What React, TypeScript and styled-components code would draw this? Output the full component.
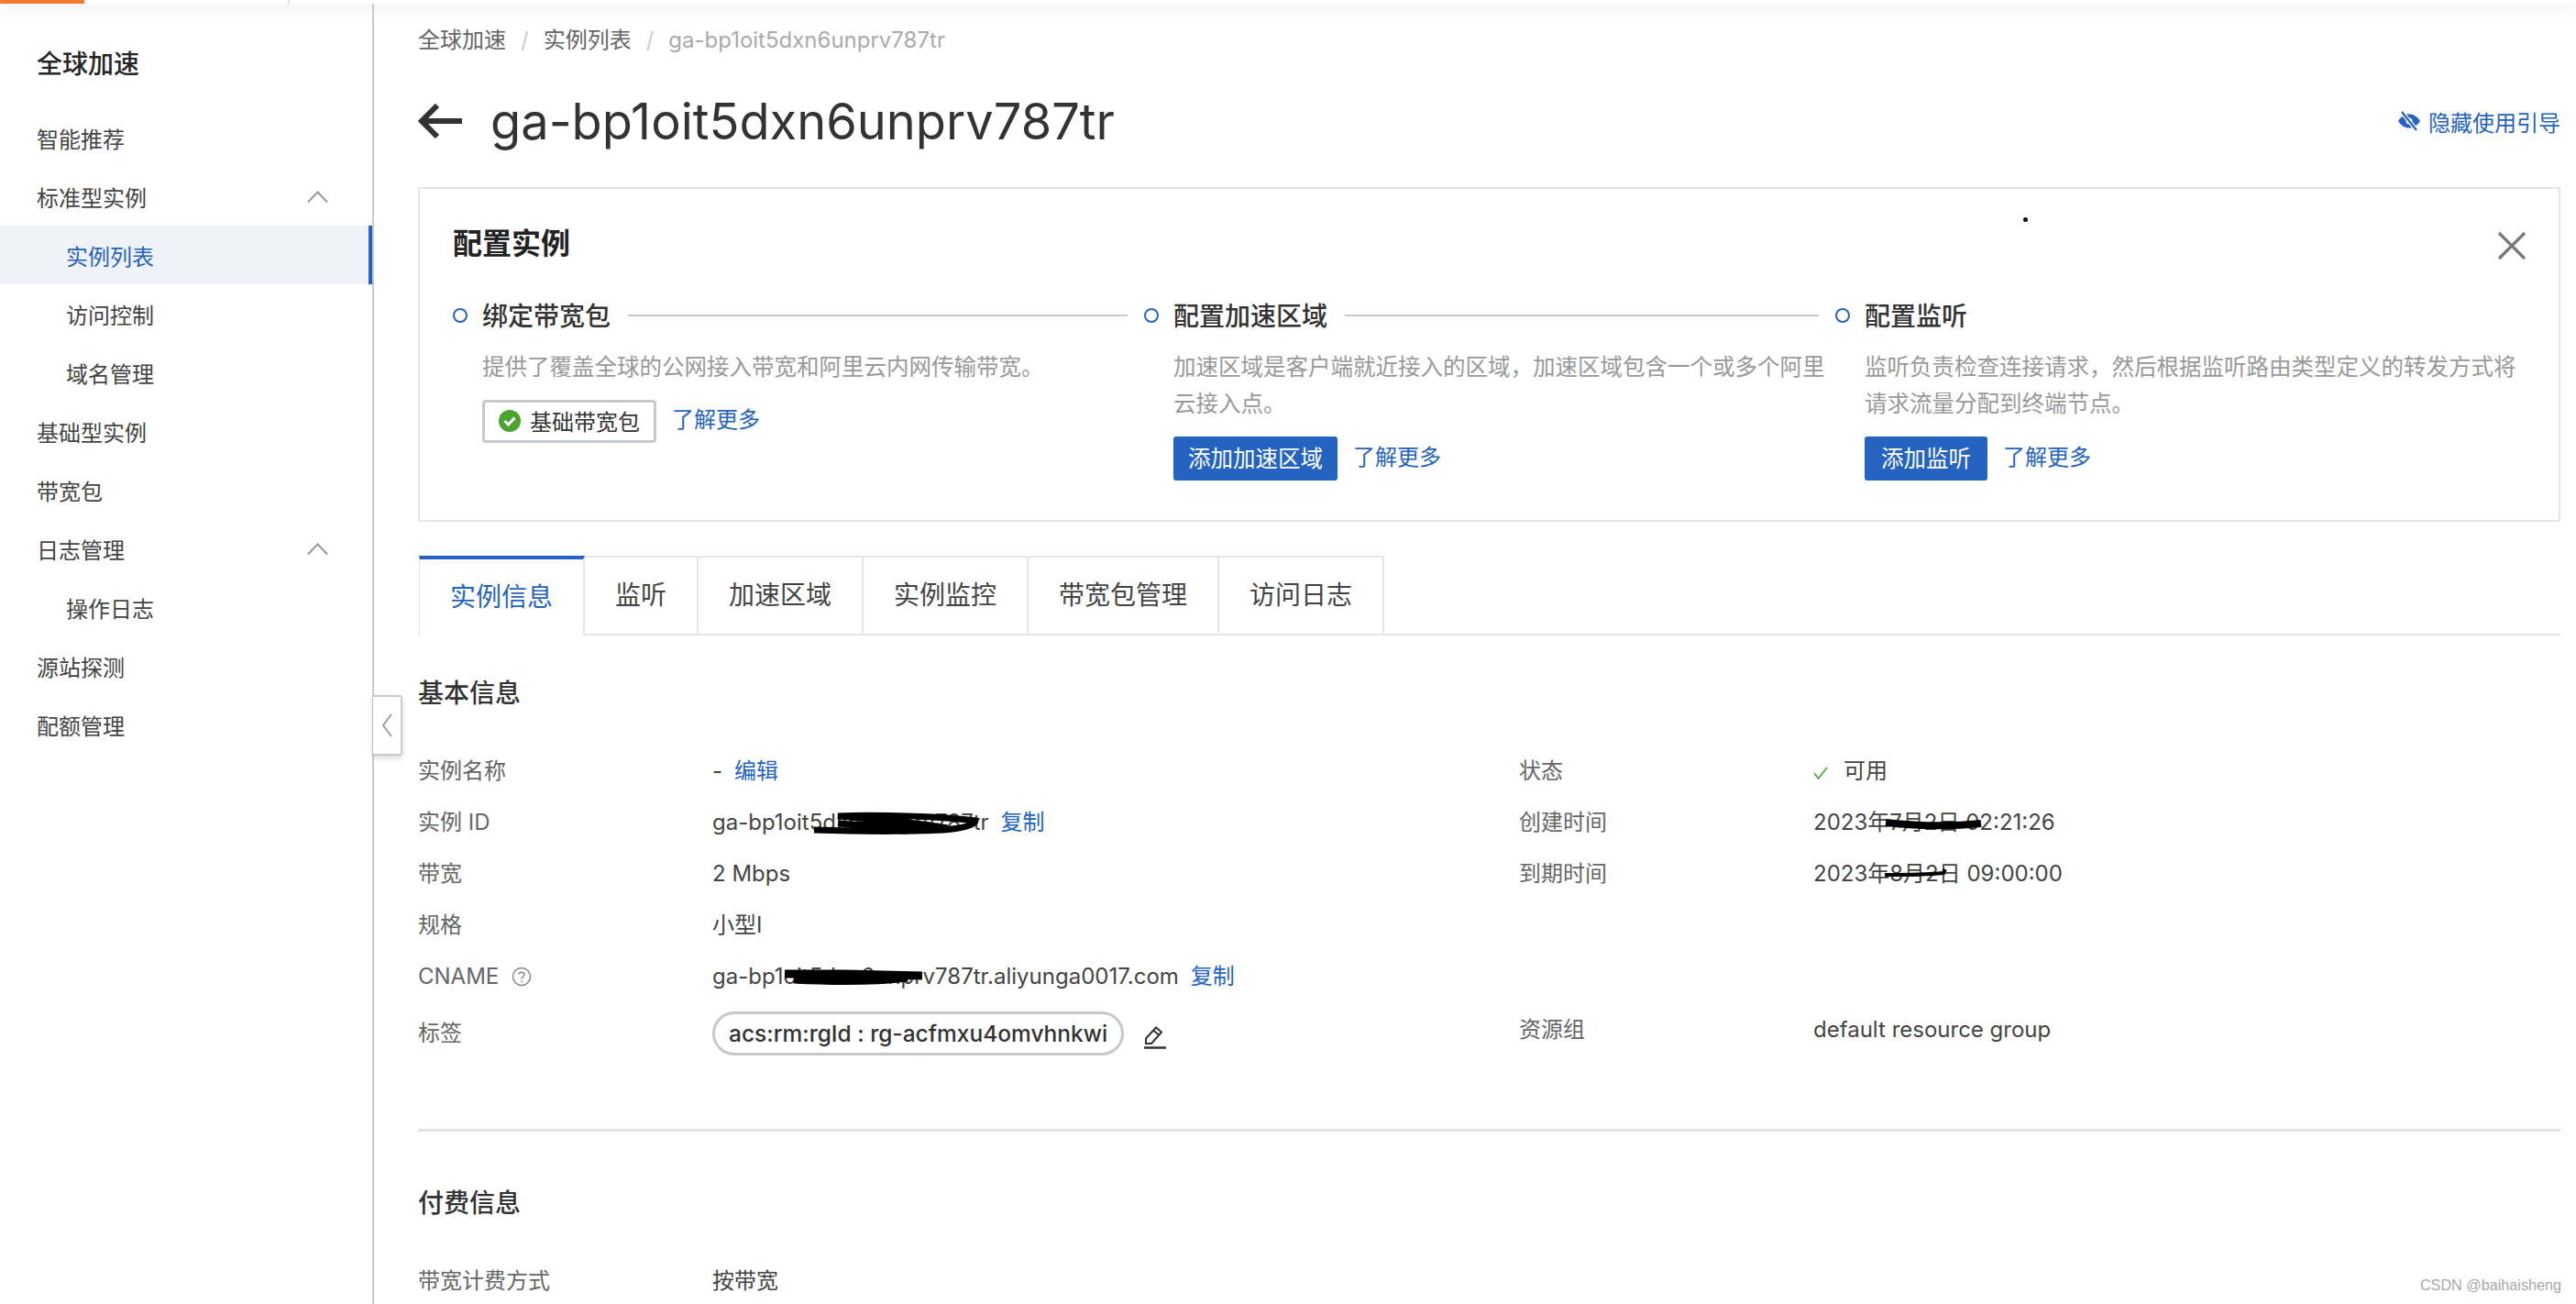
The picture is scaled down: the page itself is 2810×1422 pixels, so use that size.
import React from 'react';
import styled, { createGlobalStyle } from 'styled-components';

const FONT = '"Inter", "Noto Sans CJK SC", sans-serif';

const Global = createGlobalStyle`
  html, body {
    margin: 0;
    padding: 0;
    background: #fff;
  }
  * {
    box-sizing: border-box;
  }
`;

const Page = styled.div`
  position: relative;
  width: 2810px;
  height: 1422px;
  overflow: hidden;
  font-family: ${FONT};
  font-size: 24px;
  color: #333;
`;

const TopBar = styled.div`
  height: 4px;
  display: flex;
  background: #fff;
  box-shadow: 0 4px 16px rgba(0, 0, 0, 0.14);
`;

const TopAccent = styled.div`
  width: 92px;
  background: #f47a30;
`;

const TopTick = styled.div`
  width: 2px;
  margin-left: 222px;
  background: #e0e0e0;
`;

const Body = styled.div`
  position: relative;
  display: flex;
  height: 1418px;
`;

const Sidebar = styled.aside`
  width: 408px;
  flex: none;
  border-right: 2px solid #c8cacc;
  padding-top: 36px;
`;

const SideTitle = styled.div`
  font-size: 28px;
  font-weight: 500;
  color: #262626;
  padding-left: 40px;
  height: 60px;
  line-height: 60px;
  margin-bottom: 18px;
`;

const SideItem = styled.div<{ $sub?: boolean; $active?: boolean }>`
  height: 64px;
  display: flex;
  align-items: center;
  justify-content: space-between;
  padding-left: ${(p) => (p.$sub ? '72px' : '40px')};
  padding-right: 48px;
  color: ${(p) => (p.$active ? '#2563c0' : '#444')};
  background: ${(p) => (p.$active ? '#eff3f8' : 'transparent')};
  border-right: ${(p) => (p.$active ? '4px solid #2563c0' : 'none')};
`;

const Main = styled.main`
  flex: 1;
  padding: 22px 17px 0 48px;
  min-width: 0;
`;

const Crumbs = styled.div`
  display: flex;
  gap: 16px;
  height: 36px;
  line-height: 36px;
  color: #666;
`;

const CrumbSep = styled.span`
  color: #ccc;
`;

const CrumbLast = styled.span`
  color: #aaa;
`;

const TitleRow = styled.div`
  display: flex;
  align-items: center;
  height: 70px;
  margin-top: 35px;
`;

const BackIcon = styled.svg`
  width: 48px;
  height: 38px;
  margin-right: 31px;
  flex: none;
`;

const PageTitle = styled.h1`
  margin: 0;
  flex: 1;
  font-size: 54.2px;
  font-weight: 400;
  color: #333;
`;

const GuideLink = styled.a`
  display: flex;
  align-items: center;
  gap: 8px;
  color: #2563c0;
`;

const Panel = styled.section`
  position: relative;
  height: 365px;
  margin-top: 37px;
  border: 2px solid #e6e6e6;
  padding: 0 36px;
`;

const PanelTitle = styled.h2`
  margin: 0;
  padding-top: 40px;
  height: 110px;
  font-size: 32px;
  line-height: 40px;
  font-weight: 600;
  color: #222;
`;

const CloseIcon = styled.svg`
  position: absolute;
  top: 46px;
  right: 35px;
  width: 32px;
  height: 32px;
`;

const Speck = styled.i`
  position: absolute;
  left: 1749px;
  top: 31px;
  width: 5px;
  height: 5px;
  border-radius: 50%;
  background: #111;
`;

const Steps = styled.div`
  display: grid;
  grid-template-columns: 754px 754px 1fr;
  margin-top: 8px;
`;

const StepHead = styled.div`
  display: flex;
  align-items: center;
  height: 40px;
  padding-right: 18px;
`;

const StepDot = styled.span`
  width: 16px;
  height: 16px;
  flex: none;
  border: 2.5px solid #2563c0;
  border-radius: 50%;
  margin-right: 16px;
`;

const StepTitle = styled.span`
  font-size: 28px;
  font-weight: 500;
  color: #333;
  flex: none;
  margin-bottom: 3px;
`;

const StepLine = styled.span`
  flex: 1;
  height: 2px;
  background: #c8c8c8;
  margin-left: 19px;
`;

const StepBody = styled.div`
  padding: 16px 20px 0 32px;
`;

const StepDesc = styled.p`
  margin: 0;
  color: #999;
  font-size: 24.5px;
  line-height: 40px;
  width: 725px;
`;

const StepActions = styled.div`
  display: flex;
  align-items: center;
  gap: 17px;
  margin-top: 16px;
`;

const Tag = styled.div`
  display: flex;
  align-items: center;
  gap: 10px;
  height: 47px;
  width: 190px;
  padding: 0 0 2px 15px;
  border: 3px solid #c5c9cd;
  border-radius: 4px;
`;

const PrimaryButton = styled.button<{ $pad: number }>`
  height: 48px;
  padding: 0 ${(p) => p.$pad}px 4px;
  border: none;
  border-radius: 3px;
  background: #2563c0;
  color: #fff;
  font: inherit;
  font-size: 24.5px;
`;

const TextLink = styled.a`
  color: #2563c0;
`;

const LearnMore = styled(TextLink)`
  margin-bottom: 8px;
`;

const Tabs = styled.div`
  display: flex;
  height: 87px;
  margin-top: 37px;
  border-bottom: 2px solid #e6e6e6;
`;

const TabItem = styled.div<{ $active?: boolean }>`
  display: flex;
  align-items: center;
  height: ${(p) => (p.$active ? '87px' : '85px')};
  padding: 0 33px 5px;
  font-size: 28px;
  color: ${(p) => (p.$active ? '#2563c0' : '#444')};
  border-top: ${(p) => (p.$active ? '4px solid #2563c0' : '2px solid #e6e6e6')};
  border-right: 2px solid #e6e6e6;
  background: #fff;
  margin-left: ${(p) => (p.$active ? '1px' : '0')};
  border-left: ${(p) => (p.$active ? '1px solid #e6e6e6' : 'none')};
`;

const SectionTitle = styled.h3<{ $top: number }>`
  margin: ${(p) => p.$top}px 0 0;
  font-size: 28px;
  line-height: 40px;
  font-weight: 500;
  color: #333;
`;

const InfoGrid = styled.div`
  display: grid;
  grid-template-columns: 1201px 1fr;
  margin-top: 37px;
`;

const InfoCol = styled.div`
  display: flex;
  flex-direction: column;
`;

const InfoRow = styled.div<{ $h?: number; $top?: number }>`
  display: flex;
  align-items: center;
  height: ${(p) => p.$h ?? 56}px;
  margin-top: ${(p) => p.$top ?? 0}px;
`;

const Label = styled.span`
  width: 321px;
  flex: none;
  color: #666;
  line-height: 32px;
  display: flex;
  align-items: center;
  gap: 14px;
`;

const Value = styled.span`
  position: relative;
  display: inline-flex;
  align-items: center;
  gap: 13px;
  color: #444;
  line-height: 32px;
  white-space: nowrap;
`;

// the black marker strokes someone drew over the screenshot
const Scribble = styled.svg<{ $x: number; $y: number }>`
  position: absolute;
  left: ${(p) => p.$x}px;
  top: ${(p) => p.$y}px;
  overflow: visible;
`;

const StatusCheck = styled.svg`
  width: 16px;
  height: 14px;
  margin: 3px 4px 0 0;
`;

const Pill = styled.div`
  height: 48px;
  display: flex;
  align-items: center;
  padding: 0 15px;
  border: 3px solid #c5c9cd;
  border-radius: 24px;
  color: #333;
  font-size: 24.5px;
  font-weight: 500;
`;

const EditIcon = styled.svg`
  width: 26px;
  height: 26px;
  margin: 8px 0 0 8px;
`;

const Divider = styled.div`
  height: 3px;
  background: #e3e3e3;
  margin-top: 70px;
`;

const Watermark = styled.div`
  position: absolute;
  right: 16px;
  bottom: 11px;
  font-family: "Liberation Sans", sans-serif;
  font-size: 16.2px;
  color: #a8a8a8;
`;

const Handle = styled.div`
  position: absolute;
  left: 407px;
  top: 754px;
  width: 32px;
  height: 66px;
  display: flex;
  align-items: center;
  justify-content: center;
  background: #fff;
  border: 2px solid #c8cacc;
  border-left: none;
  border-radius: 0 3px 3px 0;
  box-shadow: 0 3px 6px rgba(0, 0, 0, 0.15);
`;

const sideItems = [
  { text: '智能推荐' },
  { text: '标准型实例', open: true },
  { text: '实例列表', sub: true, active: true },
  { text: '访问控制', sub: true },
  { text: '域名管理', sub: true },
  { text: '基础型实例' },
  { text: '带宽包' },
  { text: '日志管理', open: true },
  { text: '操作日志', sub: true },
  { text: '源站探测' },
  { text: '配额管理' },
];

const tabs = ['实例信息', '监听', '加速区域', '实例监控', '带宽包管理', '访问日志'];

function ChevronUp() {
  return (
    <svg width="23" height="13" viewBox="0 0 23 13" fill="none" stroke="#999" strokeWidth="2">
      <path d="M1 12.500 11.500 1.500 22 12.500" />
    </svg>
  );
}

function EyeOff() {
  return (
    <svg width="26" height="24" viewBox="0 0 26 24">
      <path d="M1 12c3-5 7.500-7.500 12-7.500S22 7 25 12c-3 5-7.500 7.500-12 7.500S4 17 1 12Z" fill="#2563c0" />
      <circle cx="13" cy="12" r="3.500" fill="#fff" />
      <path d="M5 2 21 22" stroke="#fff" strokeWidth="4.500" />
      <path d="M5 2 21 22" stroke="#2563c0" strokeWidth="2.200" />
    </svg>
  );
}

function CheckBadge() {
  return (
    <svg width="24" height="24" viewBox="0 0 24 24">
      <circle cx="12" cy="12" r="12" fill="#4ba32f" />
      <path d="M6.500 12 10.500 16 17.500 8.500" fill="none" stroke="#fff" strokeWidth="3" />
    </svg>
  );
}

function StepBlock(props: {
  title: string;
  desc: string;
  line?: boolean;
  action: React.ReactNode;
}) {
  return (
    <div>
      <StepHead>
        <StepDot />
        <StepTitle>{props.title}</StepTitle>
        {props.line && <StepLine />}
      </StepHead>
      <StepBody>
        <StepDesc>{props.desc}</StepDesc>
        <StepActions>
          {props.action}
          <LearnMore>了解更多</LearnMore>
        </StepActions>
      </StepBody>
    </div>
  );
}

export default function App() {
  return (
    <Page>
      <Global />
      <TopBar>
        <TopAccent />
        <TopTick />
      </TopBar>
      <Body>
        <Sidebar>
          <SideTitle>全球加速</SideTitle>
          {sideItems.map((it) => (
            <SideItem key={it.text} $sub={it.sub} $active={it.active}>
              {it.text}
              {it.open && <ChevronUp />}
            </SideItem>
          ))}
        </Sidebar>
        <Main>
          <Crumbs>
            <span>全球加速</span>
            <CrumbSep>/</CrumbSep>
            <span>实例列表</span>
            <CrumbSep>/</CrumbSep>
            <CrumbLast>ga-bp1oit5dxn6unprv787tr</CrumbLast>
          </Crumbs>
          <TitleRow>
            <BackIcon viewBox="0 0 48 38" fill="none" stroke="#333" strokeWidth="6">
              <path d="M48 19H5M21 2 4 19l17 17" />
            </BackIcon>
            <PageTitle>ga-bp1oit5dxn6unprv787tr</PageTitle>
            <GuideLink>
              <EyeOff />
              隐藏使用引导
            </GuideLink>
          </TitleRow>
          <Panel>
            <Speck />
            <PanelTitle>配置实例</PanelTitle>
            <CloseIcon viewBox="0 0 32 32" stroke="#777" strokeWidth="3.200">
              <path d="M2 2l28 28M30 2 2 30" />
            </CloseIcon>
            <Steps>
              <StepBlock
                title="绑定带宽包"
                desc="提供了覆盖全球的公网接入带宽和阿里云内网传输带宽。"
                line
                action={
                  <Tag>
                    <CheckBadge />
                    基础带宽包
                  </Tag>
                }
              />
              <StepBlock
                title="配置加速区域"
                desc="加速区域是客户端就近接入的区域，加速区域包含一个或多个阿里云接入点。"
                line
                action={<PrimaryButton $pad={16}>添加加速区域</PrimaryButton>}
              />
              <StepBlock
                title="配置监听"
                desc="监听负责检查连接请求，然后根据监听路由类型定义的转发方式将请求流量分配到终端节点。"
                action={<PrimaryButton $pad={18}>添加监听</PrimaryButton>}
              />
            </Steps>
          </Panel>
          <Tabs>
            {tabs.map((t, i) => (
              <TabItem key={t} $active={i === 0}>
                {t}
              </TabItem>
            ))}
          </Tabs>
          <SectionTitle $top={43}>基本信息</SectionTitle>
          <InfoGrid>
            <InfoCol>
              <InfoRow>
                <Label>实例名称</Label>
                <Value>
                  - <TextLink>编辑</TextLink>
                </Value>
              </InfoRow>
              <InfoRow>
                <Label>实例 ID</Label>
                <Value>
                  ga-bp1oit5dxn6unprv787tr
                  <TextLink>复制</TextLink>
                  <Scribble $x={107} $y={6} width="185" height="22" viewBox="0 0 185 22" fill="none" stroke="#000" strokeWidth="7">
                    <path d="M4 18C60 20 130 20 155 17c15-2 25-5 25-9C140 3 70 1 30 3c40 3 90 8 120 13M30 11c30 2 70 3 110 3" />
                  </Scribble>
                </Value>
              </InfoRow>
              <InfoRow>
                <Label>带宽</Label>
                <Value>2 Mbps</Value>
              </InfoRow>
              <InfoRow>
                <Label>规格</Label>
                <Value>小型I</Value>
              </InfoRow>
              <InfoRow>
                <Label>
                  CNAME
                  <svg width="22" height="22" viewBox="0 0 22 22" fill="none" stroke="#888" strokeWidth="1.500">
                    <circle cx="11" cy="11" r="9.500" />
                    <path d="M8 8.500C8 5.500 14 5.500 14 8.500c0 2.500-3 2.500-3 5M11 15.500v1.500" />
                  </svg>
                </Label>
                <Value>
                  ga-bp1oit5dxn6unprv787tr.aliyunga0017.com
                  <TextLink>复制</TextLink>
                  <Scribble $x={75} $y={8} width="156" height="16" viewBox="0 0 156 16" fill="none" stroke="#000" strokeWidth="9">
                    <path d="M4 5 70 5 154 7M14 11c40 2 90 2 124-2" />
                  </Scribble>
                </Value>
              </InfoRow>
              <InfoRow $h={68}>
                <Label>标签</Label>
                <Value>
                  <Pill>acs:rm:rgId : rg-acfmxu4omvhnkwi</Pill>
                  <EditIcon viewBox="0 0 26 26" fill="none" stroke="#333" strokeWidth="2">
                    <path d="M3 20v-5.500L14 2.500l6 5L9 20Z" />
                    <path d="M11 5.500l6 5" />
                    <path d="M1 24.500h24" strokeWidth="2.500" />
                  </EditIcon>
                </Value>
              </InfoRow>
            </InfoCol>
            <InfoCol>
              <InfoRow>
                <Label>状态</Label>
                <Value>
                  <StatusCheck viewBox="0 0 16 14" fill="none" stroke="#4cad3a" strokeWidth="1.800">
                    <path d="M1 7l4.500 6L15 1" />
                  </StatusCheck>
                  可用
                </Value>
              </InfoRow>
              <InfoRow>
                <Label>创建时间</Label>
                <Value>
                  2023年7月2日 02:21:26
                  <Scribble $x={76} $y={12} width="110" height="12" viewBox="0 0 110 12" fill="none" stroke="#000" strokeWidth="8">
                    <path d="M3 4C40 8 80 8 107 5" />
                  </Scribble>
                </Value>
              </InfoRow>
              <InfoRow>
                <Label>到期时间</Label>
                <Value>
                  2023年8月2日 09:00:00
                  <Scribble $x={76} $y={10} width="70" height="10" viewBox="0 0 70 10" fill="none" stroke="#000" strokeWidth="4">
                    <path d="M2 7C30 7 55 6 66 5l2-4" />
                  </Scribble>
                </Value>
              </InfoRow>
              <InfoRow />
              <InfoRow />
              <InfoRow $h={60}>
                <Label>资源组</Label>
                <Value>default resource group</Value>
              </InfoRow>
            </InfoCol>
          </InfoGrid>
          <Divider />
          <SectionTitle $top={58}>付费信息</SectionTitle>
          <InfoRow $top={37}>
            <Label>带宽计费方式</Label>
            <Value>按带宽</Value>
          </InfoRow>
        </Main>
        <Handle>
          <svg width="12" height="26" viewBox="0 0 12 26" fill="none" stroke="#9aa0a6" strokeWidth="2">
            <path d="M11 1 2 13l9 12" />
          </svg>
        </Handle>
      </Body>
      <Watermark>CSDN @baihaisheng</Watermark>
    </Page>
  );
}
